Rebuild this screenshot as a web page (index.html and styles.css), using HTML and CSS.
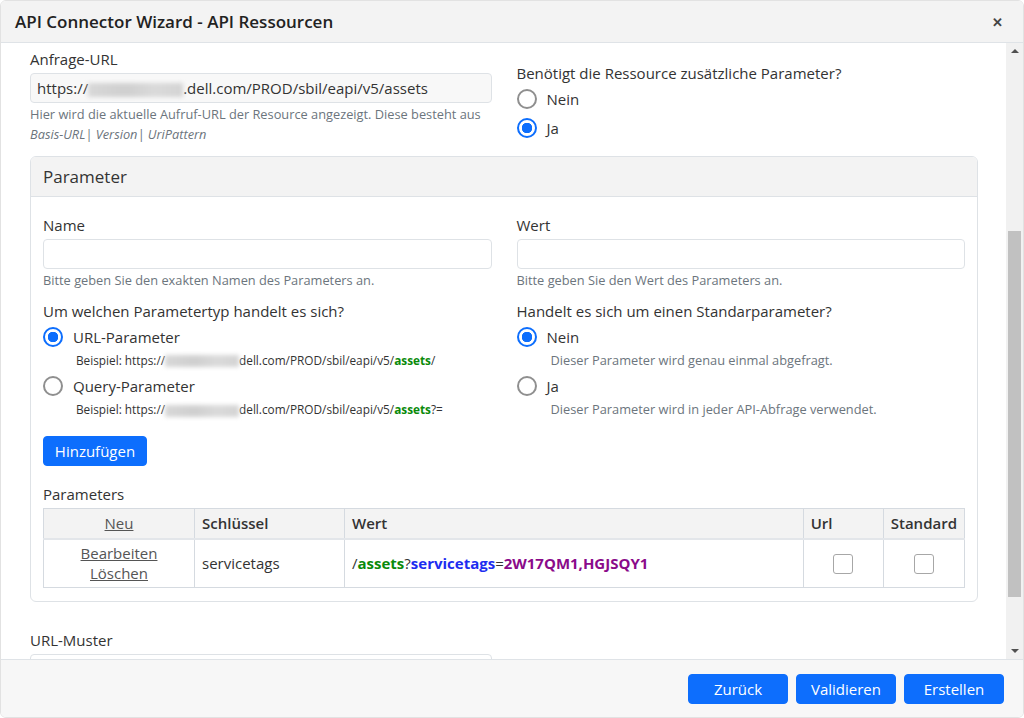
FILE: index.html
```html
<!DOCTYPE html>
<html lang="de">
<head>
<meta charset="utf-8">
<title>API Connector Wizard</title>
<link rel="stylesheet" href="styles.css">
</head>
<body>
<div class="modal">
  <div class="modal-header">
    <h1 class="modal-title">API Connector Wizard - API Ressourcen</h1>
    <span class="close">&#x2715;</span>
  </div>
  <div class="modal-body">
    <div class="content">
      <div class="row">
        <div class="col">
          <label class="label">Anfrage-URL</label>
          <div class="input readonly">https://<span class="blur blur-lg"></span>.dell.com/PROD/sbil/eapi/v5/assets</div>
          <div class="help">Hier wird die aktuelle Aufruf-URL der Resource angezeigt. Diese besteht aus <i>Basis-URL| Version| UriPattern</i></div>
        </div>
        <div class="col col-pad">
          <label class="label">Benötigt die Ressource zusätzliche Parameter?</label>
          <div class="radio"><span class="rb"></span><span>Nein</span></div>
          <div class="radio"><span class="rb checked"></span><span>Ja</span></div>
        </div>
      </div>

      <div class="card">
        <div class="card-header">Parameter</div>
        <div class="card-body">
          <div class="row">
            <div class="col">
              <label class="label">Name</label>
              <div class="input"></div>
              <div class="help">Bitte geben Sie den exakten Namen des Parameters an.</div>
            </div>
            <div class="col">
              <label class="label">Wert</label>
              <div class="input"></div>
              <div class="help">Bitte geben Sie den Wert des Parameters an.</div>
            </div>
          </div>
          <div class="row row-types">
            <div class="col">
              <label class="label">Um welchen Parametertyp handelt es sich?</label>
              <div class="radio"><span class="rb checked"></span><span>URL-Parameter</span></div>
              <div class="example">Beispiel: https://<span class="blur blur-sm"></span>dell.com/PROD/sbil/eapi/v5/<b class="g">assets</b>/</div>
              <div class="radio"><span class="rb"></span><span>Query-Parameter</span></div>
              <div class="example">Beispiel: https://<span class="blur blur-sm"></span>dell.com/PROD/sbil/eapi/v5/<b class="g">assets</b>?=</div>
            </div>
            <div class="col">
              <label class="label">Handelt es sich um einen Standarparameter?</label>
              <div class="radio"><span class="rb checked"></span><span>Nein</span></div>
              <div class="rhelp">Dieser Parameter wird genau einmal abgefragt.</div>
              <div class="radio"><span class="rb"></span><span>Ja</span></div>
              <div class="rhelp">Dieser Parameter wird in jeder API-Abfrage verwendet.</div>
            </div>
          </div>
          <button class="btn btn-add">Hinzufügen</button>
          <div class="label table-label">Parameters</div>
          <table class="table">
            <thead>
              <tr>
                <th class="c-act"><a>Neu</a></th>
                <th class="c-key">Schlüssel</th>
                <th class="c-val">Wert</th>
                <th class="c-url">Url</th>
                <th class="c-std">Standard</th>
              </tr>
            </thead>
            <tbody>
              <tr>
                <td class="c-act"><a>Bearbeiten</a><br><a>Löschen</a></td>
                <td>servicetags</td>
                <td class="val">/<b class="g">assets</b>?<b class="b">servicetags</b>=<b class="p">2W17QM1,HGJSQY1</b></td>
                <td class="chk"><span class="cb"></span></td>
                <td class="chk"><span class="cb"></span></td>
              </tr>
            </tbody>
          </table>
        </div>
      </div>

      <div class="row row-last">
        <div class="col">
          <label class="label">URL-Muster</label>
          <div class="input"></div>
        </div>
      </div>
    </div>
    <div class="scrollbar">
      <span class="arrow up"></span>
      <div class="track"><div class="thumb"></div></div>
      <span class="arrow down"></span>
    </div>
  </div>
  <div class="modal-footer">
    <button class="btn">Zurück</button>
    <button class="btn">Validieren</button>
    <button class="btn">Erstellen</button>
  </div>
</div>
</body>
</html>
```

FILE: styles.css
```css
* { box-sizing: border-box; }
html, body { margin: 0; padding: 0; background: #fff; }
body {
  font-family: "Open Sans", "Liberation Sans", sans-serif;
  font-size: 15px;
  color: #333;
}
.modal {
  width: 1024px;
  height: 718px;
  display: flex;
  flex-direction: column;
  border: 1px solid #e2e2e2;
  border-radius: 6px;
  overflow: hidden;
}
.modal-header {
  height: 42px;
  flex: none;
  background: #f3f3f3;
  border-bottom: 1px solid #dfe3e7;
  display: flex;
  align-items: center;
  justify-content: space-between;
  padding: 0 20px 0 14px;
}
.modal-title {
  margin: 0;
  font-size: 17px;
  font-weight: 600;
  color: #222;
}
.close { font-size: 13px; font-weight: 700; color: #444; }
.modal-body {
  flex: 1;
  display: flex;
  overflow: hidden;
  min-height: 0;
}
.content {
  flex: 1;
  overflow: hidden;
  padding: 6px 28px 0 29px;
}
.row {
  display: grid;
  grid-template-columns: 1fr 1fr;
  column-gap: 25px;
}
.label {
  display: block;
  line-height: 21px;
  color: #333;
}
.col-pad { padding-top: 14px; }
.input {
  height: 30px;
  border: 1px solid #dee2e6;
  border-radius: 4px;
  background: #fff;
  margin-top: 3px;
  padding: 0 6px;
  line-height: 28px;
  color: #333;
}
.input.readonly { background: #f8f8f8; }
.blur {
  display: inline-block;
  vertical-align: middle;
  background: linear-gradient(90deg, #d8d8d8, #cfcfcf 40%, #dadada 70%, #d4d4d4);
  filter: blur(2px);
}
.blur-lg { width: 95px; height: 14px; }
.blur-sm { width: 74px; height: 12px; }
.help {
  font-size: 12.8px;
  line-height: 20px;
  color: #6c757d;
  margin-top: 1px;
}
.radio {
  display: flex;
  align-items: center;
  gap: 10px;
  height: 29.5px;
}
.rb {
  width: 20px;
  height: 20px;
  border: 2px solid #8f8f8f;
  border-radius: 50%;
  flex: none;
  background: #fff;
}
.rb.checked {
  border-color: #0d6efd;
  background: radial-gradient(circle, #0d6efd 0 5px, #fff 5.5px);
  border-width: 2px;
}
.card {
  margin-top: 12px;
  border: 1px solid #dee2e6;
  border-radius: 6px;
  overflow: hidden;
}
.card-header {
  height: 40px;
  background: #f3f3f3;
  border-bottom: 1px solid #dee2e6;
  padding: 0 12px;
  display: flex;
  align-items: center;
  font-size: 17px;
}
.card-body { padding: 18px 12px 13px 12px; }
.row-types { margin-top: 11px; }
.example {
  font-size: 11.8px;
  color: #333;
  padding-left: 33px;
  line-height: 16px;
  margin-bottom: 4px;
}
.rhelp {
  font-size: 12.8px;
  color: #6c757d;
  padding-left: 34px;
  line-height: 16px;
  margin-bottom: 4px;
}
.g { color: #0a8a0a; font-weight: 700; }
.b { color: #1c2cf0; font-weight: 700; }
.p { color: #8a0a8a; font-weight: 700; }
.btn {
  font-family: inherit;
  font-size: 15px;
  font-weight: 500;
  color: #fff;
  background: #0d6efd;
  border: 1px solid #0d6efd;
  border-radius: 4px;
  height: 30px;
  padding: 0 12px;
  cursor: pointer;
}
.btn-add { margin-top: 15px; width: 104px; padding: 0; }
.table-label { margin-top: 18px; }
.table {
  margin-top: 3px;
  width: 100%;
  border-collapse: collapse;
  border: 1px solid #dee2e6;
}
.table th, .table td {
  border: 1px solid #d5dae0;
  padding: 0 7px;
  text-align: left;
}
.table th {
  height: 30px;
  background: #f3f3f3;
  font-weight: 600;
  color: #333;
}
.table thead tr { border-bottom: 2px solid #e3e6ea; }
.table td { height: 49px; line-height: 20px; }
.table .c-act { width: 151px; text-align: center; }
.table .c-key { width: 150px; }
.table .c-url { width: 80px; }
.table .c-std { width: 79px; }
.table a { color: #555; text-decoration: underline; font-weight: 400; }
.chk { text-align: center !important; }
.cb {
  display: inline-block;
  width: 20px;
  height: 20px;
  border: 1px solid #a7a7a7;
  border-radius: 3px;
  vertical-align: middle;
}
.row-last { margin-top: 28px; }
.scrollbar {
  width: 17px;
  flex: none;
  background: #f1f1f1;
  display: flex;
  flex-direction: column;
  align-items: center;
  padding: 0 1px 0 1px;
}
.arrow { width: 0; height: 0; border-left: 4px solid transparent; border-right: 4px solid transparent; margin: 6px 0; }
.arrow.up { border-bottom: 4px solid #505050; }
.arrow.down { border-top: 4px solid #505050; }
.track { flex: 1; width: 100%; padding: 172px 1px 46px 1px; }
.thumb { height: 100%; background: #c1c1c1; }
.modal-footer {
  height: 58px;
  flex: none;
  background: #f7f7f7;
  border-top: 1px solid #dfe3e7;
  display: flex;
  justify-content: flex-end;
  align-items: center;
  gap: 8px;
  padding: 0 19px 0 0;
}
.modal-footer .btn { width: 100px; padding: 0; }
```
